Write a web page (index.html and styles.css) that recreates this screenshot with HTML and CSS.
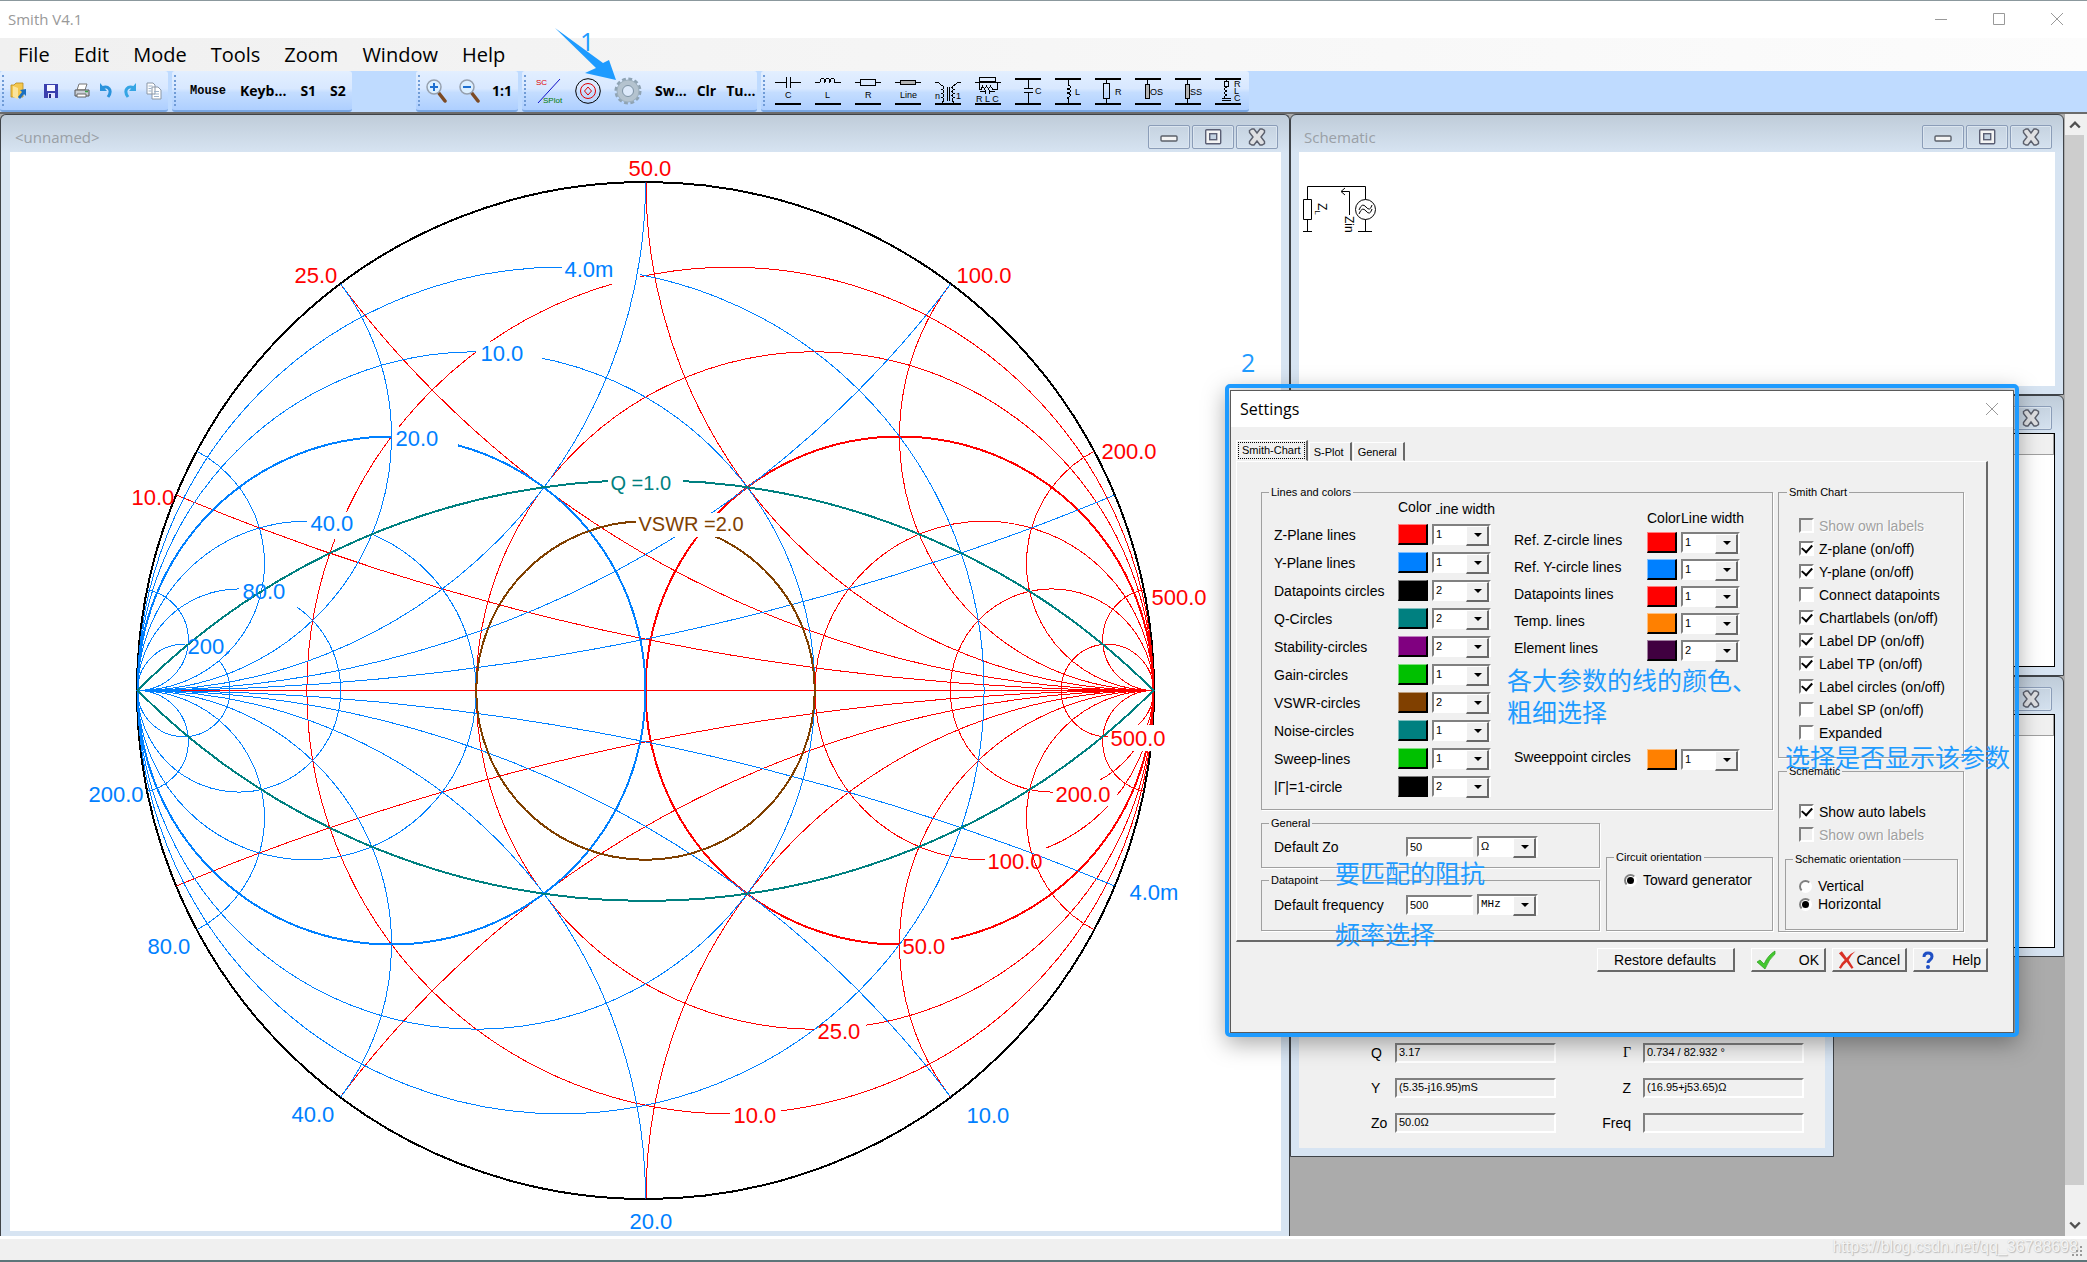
FILE: index.html
```html
<!DOCTYPE html>
<html lang="en">
<head>
<meta charset="utf-8">
<title>Smith V4.1</title>
<link rel="stylesheet" href="styles.css">
</head>
<body>
<svg class="defs" aria-hidden="true">
  <defs>
    <symbol id="i-min" viewBox="0 0 18 18"><rect x="1" y="8" width="16" height="5" rx="1" fill="#f4f4f4" stroke="#5b6069" stroke-width="1.4"/></symbol>
    <symbol id="i-max" viewBox="0 0 18 18"><rect x="1.7" y="1.7" width="15" height="14" rx="1" fill="#f4f4f4" stroke="#5b5f74" stroke-width="1.4"/><rect x="5.7" y="5.7" width="7" height="6" fill="#c5d3e2" stroke="#5b5f74" stroke-width="1.4"/></symbol>
    <symbol id="i-close" viewBox="0 0 18 18"><path d="M1.5 2.5 4 1h2l3 4 3-4h2l2.500 1.500v2L13 9l3.500 4.500v2L14 17h-2l-3-4-3 4H4l-2.500-1.500v-2L5 9 1.500 4.500z" fill="#dfe0e3" stroke="#5b5f6c" stroke-width="1.400"/></symbol>
  </defs>
</svg>

<header class="titlebar">
  <h1>Smith V4.1</h1>
  <div class="caption-buttons">
    <button type="button" aria-label="Minimize"><svg viewBox="0 0 12 12"><path d="M0 6.5h12"/></svg></button>
    <button type="button" aria-label="Maximize"><svg viewBox="0 0 12 12"><path d="M.5.5h11v11H.5z"/></svg></button>
    <button type="button" aria-label="Close"><svg viewBox="0 0 12 12"><path d="m0 0 12 12M12 0 0 12"/></svg></button>
  </div>
</header>

<nav class="menubar">
  <button type="button">File</button><button type="button">Edit</button><button type="button">Mode</button><button type="button">Tools</button><button type="button">Zoom</button><button type="button">Window</button><button type="button">Help</button>
</nav>

<div class="toolbar">
  <div class="band band-file">
    <button type="button" class="t-wide" aria-label="Open"><svg width="18" height="18" viewBox="0 0 18 18"><path d="M1 3h3l2-2h7v14H1z" fill="#f3c74f" stroke="#b98a1d" stroke-width=".8"/><path d="M3 4l5 2v11l-5-2z" fill="#fbe49b"/><path d="M16 7v7l-2-2-4 5-2-2 4-5-2-2z" fill="#1b6fc0"/></svg></button>
    <button type="button" class="t-wide" aria-label="Save"><svg width="14" height="16" viewBox="0 0 14 16"><path d="M0 1h14v14H0z" fill="#3a3fae"/><path d="M3 2h8v6H3z" fill="#f5f6ff"/><path d="M4 10h7v5H4z" fill="#dfe3ff"/><path d="M5 11h2v4H5z" fill="#222a80"/></svg></button>
    <button type="button" class="t-small first" aria-label="Print"><svg width="16" height="16" viewBox="0 0 16 16"><path d="m5 1 8 0-2 6H3z" fill="#fff" stroke="#777"/><path d="M1 7h14v6H1z" fill="#c9ced6" stroke="#555"/><path d="M3 11h9v3H3z" fill="#fff" stroke="#666"/><path d="M11 8.500h3" stroke="#3aa34a" stroke-width="1.500"/></svg></button>
    <button type="button" class="t-small" aria-label="Undo"><svg width="14" height="16" viewBox="0 0 14 16"><path d="M3 5c6-3 11 2 6 9" fill="none" stroke="#2b93dc" stroke-width="3"/><path d="M1 0v8h7z" fill="#2b93dc"/></svg></button>
    <button type="button" class="t-small" aria-label="Redo"><svg width="14" height="16" viewBox="0 0 14 16"><path d="M11 5C5 2 0 7 5 14" fill="none" stroke="#35a5e4" stroke-width="3"/><path d="M13 0v8H6z" fill="#35a5e4"/></svg></button>
    <button type="button" class="t-small" aria-label="Copy"><svg width="16" height="18" viewBox="0 0 16 18"><path d="M1 1h6l2 2v9H1zM6 5h6l3 3v9H6z" fill="#fff" stroke="#8b97a6"/><path d="M2.500 4h4m-4 2.500h3m-3 2.500h3M8 9.500h5M8 12h5m-5 2.500h5" stroke="#9fb4cc"/></svg></button>
  </div>
  <div class="band band-mode">
    <button type="button" class="mono">Mouse</button><button type="button">Keyb...</button><button type="button">S1</button><button type="button">S2</button>
  </div>
  <div class="band band-zoom">
    <button type="button" aria-label="Zoom in"><svg width="21" height="24" viewBox="0 0 21 24"><path d="m12 13 7 9" stroke="#7c4a24" stroke-width="3.500" stroke-linecap="round"/><circle cx="8" cy="8" r="7" fill="#dcefff" stroke="#96a0ae" stroke-width="1.500"/><path d="M8 4v8M4 8h8" stroke="#1d6fd0" stroke-width="2"/></svg></button>
    <button type="button" aria-label="Zoom out"><svg width="21" height="24" viewBox="0 0 21 24"><path d="m12 13 7 9" stroke="#7c4a24" stroke-width="3.500" stroke-linecap="round"/><circle cx="8" cy="8" r="7" fill="#dcefff" stroke="#96a0ae" stroke-width="1.500"/><path d="M4 8h8" stroke="#1d6fd0" stroke-width="2"/></svg></button>
    <button type="button">1:1</button>
  </div>
  <div class="band band-view">
    <button type="button" aria-label="Smith chart or S-plot"><svg class="glyphs" width="26" height="26" viewBox="0 0 26 26"><path d="M2 25 24 1" stroke="#1010c8"/><text x="0" y="7" fill="#e00000">SC</text><text x="7" y="25" fill="#007a00">SPlot</text></svg></button>
    <button type="button" aria-label="Circles"><svg width="26" height="26" viewBox="0 0 26 26" fill="none"><circle cx="13" cy="13" r="12.300" stroke="#000"/><circle cx="13" cy="13" r="7.500" stroke="#e00000"/><path d="m13 9 3.500 4-3.500 4-3.500-4z" stroke="#e00000"/></svg></button>
    <button type="button" aria-label="Settings"><svg width="28" height="30" viewBox="0 0 28 30"><circle cx="14" cy="15" r="12" fill="none" stroke="#8fa3b3" stroke-width="3" stroke-dasharray="3.800 2.480"/><circle cx="14" cy="15" r="8" fill="none" stroke="#b4c3cf" stroke-width="6"/><circle cx="14" cy="15" r="11" fill="none" stroke="#9cafbd"/><circle cx="14" cy="15" r="5.500" fill="#dce9fa" stroke="#7e93a5"/></svg></button>
    <button type="button" class="t-text">Sw...</button><button type="button" class="t-text">Clr</button><button type="button" class="t-text">Tu...</button>
  </div>
  <div class="band band-parts">
    <button type="button" aria-label="Series C"><svg class="part" viewBox="0 0 26 28"><path d="M0 5.500h11.500M15.500 5.500H26M11.500 0v11M15.500 0v11"/><path class="bar" d="M0 26.500h26"/><text x="10" y="21">C</text></svg></button>
    <button type="button" aria-label="Series L"><svg class="part" viewBox="0 0 26 28"><path d="M0 5.500h5q0-4 2.500-4t2.500 4q0-4 2.500-4t2.500 4q0-4 2.500-4t2.500 4h6"/><path class="bar" d="M0 26.500h26"/><text x="10" y="21">L</text></svg></button>
    <button type="button" aria-label="Series R"><svg class="part" viewBox="0 0 26 28"><path d="M0 5.500h5.500M20.500 5.500H26M5.500 2.500h15v6h-15z"/><path class="bar" d="M0 26.500h26"/><text x="10" y="21">R</text></svg></button>
    <button type="button" aria-label="Series line"><svg class="part" viewBox="0 0 26 28"><path d="M0 5.500h5.500M20.500 5.500H26"/><path class="fill" d="M5.500 3.500h15v4h-15z"/><path class="bar" d="M0 26.500h26"/><text x="5" y="21">Line</text></svg></button>
    <button type="button" aria-label="Transformer"><svg class="part" viewBox="0 0 26 28"><path d="M0 5.500h3l4 3q4 2 0 4 4 2 0 4 4 2 0 4 4 2 0 5M26 5.500h-3l-4 3q-4 2 0 4-4 2 0 4-4 2 0 4-4 2 0 5M12 10v14M14.500 10v14"/><path class="bar" d="M0 26.500h26"/><text x="0" y="22">n</text><text x="21" y="22">1</text></svg></button>
    <button type="button" aria-label="Parallel RLC"><svg class="part" viewBox="0 0 26 28"><path d="M4.500 0h16v4h-16zM0 5.500h26M4.500 6v6l2 0 1-3 2 3 2-3 2 3 2-3 2 3h5V6M10.500 12.500v4M14.500 12.500v4M5 14.500h5M15 14.500h5"/><path class="bar" d="M0 26.500h26"/><text x="1" y="25">R L C</text></svg></button>
    <button type="button" aria-label="Shunt C"><svg class="part" viewBox="0 0 26 28"><path class="bar" d="M0 1.500h26M0 26.500h26"/><path d="M13.500 2v9M13.500 15v11M9 11.500h9M9 15.500h9"/><text x="20" y="17">C</text></svg></button>
    <button type="button" aria-label="Shunt L"><svg class="part" viewBox="0 0 26 28"><path class="bar" d="M0 1.500h26M0 26.500h26"/><path d="M13.500 2v6q5 2-1 4 6 2 0 4 6 2 0 5l1 0v5"/><text x="20" y="18">L</text></svg></button>
    <button type="button" aria-label="Shunt R"><svg class="part" viewBox="0 0 26 28"><path class="bar" d="M0 1.500h26M0 26.500h26"/><path d="M11.500 2v4M11.500 22v4M8.500 6.500h6v15h-6z"/><text x="20" y="18">R</text></svg></button>
    <button type="button" aria-label="Open stub"><svg class="part" viewBox="0 0 26 28"><path class="bar" d="M0 1.500h26M0 26.500h26"/><path d="M12.500 2v20"/><path class="fill" d="M10.500 7.500h4v14h-4z"/><text x="15" y="18">OS</text></svg></button>
    <button type="button" aria-label="Shorted stub"><svg class="part" viewBox="0 0 26 28"><path class="bar" d="M0 1.500h26M0 26.500h26"/><path d="M12.500 2v24"/><path class="fill" d="M10.500 7.500h4v14h-4z"/><text x="15" y="18">SS</text></svg></button>
    <button type="button" aria-label="Shunt series RLC"><svg class="part" viewBox="0 0 26 28"><path class="bar" d="M0 1.500h26M0 26.500h26"/><path d="M11.500 2v2M9.500 4.500h4v5h-4zM11.500 10q-4 2 0 4-4 2 0 4-4 2 0 4M7 21.500h9M7 23.500h9"/><text x="19" y="10">R</text><text x="19" y="17">L</text><text x="19" y="24">C</text></svg></button>
  </div>
</div>

<main class="workspace">
  <section class="window w-chart">
    <header><h2>&lt;unnamed&gt;</h2>
      <div class="win-buttons"><button type="button" aria-label="Minimize"><svg><use href="#i-min"/></svg></button><button type="button" aria-label="Maximize"><svg><use href="#i-max"/></svg></button><button type="button" aria-label="Close"><svg><use href="#i-close"/></svg></button></div>
    </header>
    <div class="content">
      <svg class="smith" viewBox="0 0 1271 1079" role="img" aria-label="Smith chart">
        <defs><clipPath id="unit"><circle r="508"/></clipPath></defs>
        <g transform="translate(635.5 538.5)">
          <circle class="rim" r="508.500"/>
          <!-- constant resistance circles, 10 to 500 ohm -->
          <g class="z">
            <circle cx="84.700" r="423.300"/><path class="mask" d="M84 411h51v26H84z"/>
            <circle cx="169.300" r="338.700"/><path class="mask" d="M169 326h51v26h-51z"/>
            <circle class="ref" cx="254" r="254"/><path class="mask" d="M254 242h51v26h-51z"/>
            <circle cx="338.700" r="169.300"/><path class="mask" d="M339 157h64v26h-64z"/>
            <circle cx="406.400" r="101.600"/><path class="mask" d="M407 89h64v26h-64z"/>
            <circle cx="461.800" r="46.200"/><path class="mask" d="M462 34h52v26h-52z"/>
          </g>
          <!-- constant reactance arcs -->
          <g class="z" clip-path="url(#unit)">
            <path d="M-470 0H508"/>
            <circle cx="508" cy="-2540" r="2540"/><circle cx="508" cy="2540" r="2540"/>
            <circle cx="508" cy="-1016" r="1016"/><circle cx="508" cy="1016" r="1016"/>
            <circle cx="508.500" cy="-508" r="508"/><circle cx="508.500" cy="508" r="508"/>
            <circle cx="508" cy="-254" r="254"/><circle cx="508" cy="254" r="254"/>
            <circle cx="508" cy="-127" r="127"/><circle cx="508" cy="127" r="127"/>
            <circle cx="508" cy="-50.800" r="50.800"/><circle cx="508" cy="50.800" r="50.800"/>
          </g>
          <!-- constant conductance circles, 4 to 200 mS -->
          <g class="y">
            <circle cx="-84.700" r="423.300"/><path class="mask" d="M-84-434h78v27h-78z"/>
            <circle cx="-169.300" r="338.700"/><path class="mask" d="M-170-349h66v27h-66z"/>
            <circle class="ref" cx="-254" r="254"/><path class="mask" d="M-254-264h66v27h-66z"/>
            <circle cx="-338.700" r="169.300"/><path class="mask" d="M-339-179h66v27h-66z"/>
            <circle cx="-406.400" r="101.600"/><path class="mask" d="M-407-111h64v27h-64z"/>
            <circle cx="-461.800" r="46.200"/><path class="mask" d="M-461-56h34v27h-34z"/>
          </g>
          <!-- constant susceptance arcs -->
          <g class="y" clip-path="url(#unit)">
            <circle cx="-508" cy="-2540" r="2540"/><circle cx="-508" cy="2540" r="2540"/>
            <circle cx="-508" cy="-1016" r="1016"/><circle cx="-508" cy="1016" r="1016"/>
            <circle cx="-508" cy="-508" r="508"/><circle cx="-508" cy="508" r="508"/>
            <circle cx="-508" cy="-254" r="254"/><circle cx="-508" cy="254" r="254"/>
            <circle cx="-508" cy="-127" r="127"/><circle cx="-508" cy="127" r="127"/>
            <circle cx="-508" cy="-50.800" r="50.800"/><circle cx="-508" cy="50.800" r="50.800"/>
          </g>
          <g class="q"><path d="M-508 0A718.400 718.400 0 0 1 508 0A718.400 718.400 0 0 1-508 0"/><path class="mask" d="M-38-218h75v22h-75z"/></g>
          <g class="vswr"><circle r="169.300"/><path class="mask" d="M-10-178h115v24H-10z"/></g>
          <g class="labels red">
            <text x="88" y="432">10.0</text><text x="172" y="348">25.0</text><text x="257" y="263">50.0</text><text x="342" y="178">100.0</text><text x="410" y="111">200.0</text><text x="465" y="55">500.0</text>
            <text x="-17" y="-515">50.0</text><text x="-351" y="-408">25.0</text><text x="-514" y="-186">10.0</text><text x="311" y="-408">100.0</text><text x="456" y="-232">200.0</text><text x="506" y="-86">500.0</text>
          </g>
          <g class="labels blue">
            <text x="-81" y="-414">4.0m</text><text x="-165" y="-330">10.0</text><text x="-250" y="-245">20.0</text><text x="-335" y="-160">40.0</text><text x="-403" y="-92">80.0</text><text x="-458" y="-37">200.</text>
            <text x="-557" y="111">200.0</text><text x="-498" y="263">80.0</text><text x="-354" y="431">40.0</text><text x="-16" y="538">20.0</text><text x="321" y="432">10.0</text><text x="484" y="209">4.0m</text>
          </g>
          <g class="labels small"><text class="teal" x="-35" y="-201">Q =1.0</text><text class="brown" x="-7" y="-160">VSWR =2.0</text></g>
        </g>
      </svg>
    </div>
  </section>

  <section class="window w-schematic">
    <header><h2>Schematic</h2>
      <div class="win-buttons"><button type="button" aria-label="Minimize"><svg><use href="#i-min"/></svg></button><button type="button" aria-label="Maximize"><svg><use href="#i-max"/></svg></button><button type="button" aria-label="Close"><svg><use href="#i-close"/></svg></button></div>
    </header>
    <div class="content">
      <svg class="circuit" width="90" height="90" viewBox="0 0 90 90" role="img" aria-label="Load and generator">
        <path d="M8.500 47.500v-13h58v13M4.500 47.500h8v20h-8zM8.500 67.500v12M4 79.500h9M66.500 67.500v12M59 79.500h14M50.500 63v-23.500h-8M46 36l-4 3.500 4 3.500"/>
        <circle cx="66.500" cy="57.500" r="10"/>
        <path d="M60 58q3-8 7-3t6-2M60 62q3-8 7-3t6-2"/>
        <text transform="translate(19 51) rotate(90)">Z<tspan class="sub" dy="3">L</tspan></text>
        <text transform="translate(46 64) rotate(90)">Zin</text>
      </svg>
    </div>
  </section>

  <section class="window w-list w-datapoints">
    <header><div class="win-buttons"><button type="button" aria-label="Close"><svg><use href="#i-close"/></svg></button></div></header>
    <div class="content"><div class="list-head"></div></div>
  </section>
  <section class="window w-list w-startpoint">
    <header><div class="win-buttons"><button type="button" aria-label="Close"><svg><use href="#i-close"/></svg></button></div></header>
    <div class="content"><div class="list-head"></div></div>
  </section>

  <section class="window w-cursor">
    <header></header>
    <form class="content readout">
      <label for="q">Q</label><input id="q" value="3.17" readonly><label class="end greek" for="gamma">Γ</label><input id="gamma" value="0.734 / 82.932 °" readonly>
      <label for="y">Y</label><input id="y" value="(5.35-j16.95)mS" readonly><label class="end" for="z">Z</label><input id="z" value="(16.95+j53.65)Ω" readonly>
      <label for="zo">Zo</label><input id="zo" value="50.0Ω" readonly><label class="end" for="freq">Freq</label><input id="freq" value="" readonly>
    </form>
  </section>

  <div class="scrollbar">
    <button type="button" aria-label="Scroll up"><svg viewBox="0 0 10 7"><path d="m1 6 4-4 4 4"/></svg></button>
    <div class="thumb"></div>
    <button type="button" aria-label="Scroll down"><svg viewBox="0 0 10 7"><path d="m1 1 4 4 4-4"/></svg></button>
  </div>

  <section class="dialog" role="dialog" aria-labelledby="dlg-title">
    <header><h2 id="dlg-title">Settings</h2><button type="button" aria-label="Close"><svg viewBox="0 0 12 12"><path d="m0 0 12 12M12 0 0 12"/></svg></button></header>
    <form class="dialog-body">
      <div class="tabs" role="tablist">
        <button type="button" role="tab" class="active" aria-selected="true"><span>Smith-Chart</span></button><button type="button" role="tab">S-Plot</button><button type="button" role="tab">General</button>
      </div>
      <div class="panel">
        <div class="col-main">
          <fieldset class="lines"><legend>Lines and colors</legend>
            <div class="line-grid left">
              <span></span><span class="head head-color">Color</span><span class="head">Line width</span>
              <label for="l1">Z-Plane lines</label><button type="button" class="swatch c-red" aria-label="Color"></button><span class="combo"><select id="l1"><option>1</option></select></span>
              <label for="l2">Y-Plane lines</label><button type="button" class="swatch c-blue" aria-label="Color"></button><span class="combo"><select id="l2"><option>1</option></select></span>
              <label for="l3">Datapoints circles</label><button type="button" class="swatch c-black" aria-label="Color"></button><span class="combo"><select id="l3"><option>2</option></select></span>
              <label for="l4">Q-Circles</label><button type="button" class="swatch c-teal" aria-label="Color"></button><span class="combo"><select id="l4"><option>2</option></select></span>
              <label for="l5">Stability-circles</label><button type="button" class="swatch c-purple" aria-label="Color"></button><span class="combo"><select id="l5"><option>2</option></select></span>
              <label for="l6">Gain-circles</label><button type="button" class="swatch c-green" aria-label="Color"></button><span class="combo"><select id="l6"><option>1</option></select></span>
              <label for="l7">VSWR-circles</label><button type="button" class="swatch c-brown" aria-label="Color"></button><span class="combo"><select id="l7"><option>2</option></select></span>
              <label for="l8">Noise-circles</label><button type="button" class="swatch c-teal" aria-label="Color"></button><span class="combo"><select id="l8"><option>1</option></select></span>
              <label for="l9">Sweep-lines</label><button type="button" class="swatch c-green" aria-label="Color"></button><span class="combo"><select id="l9"><option>1</option></select></span>
              <label for="l10">|Γ|=1-circle</label><button type="button" class="swatch c-black" aria-label="Color"></button><span class="combo"><select id="l10"><option>2</option></select></span>
            </div>
            <div class="line-grid right">
              <span></span><span class="head">Color</span><span class="head">Line width</span>
              <label for="r1">Ref. Z-circle lines</label><button type="button" class="swatch c-red" aria-label="Color"></button><span class="combo"><select id="r1"><option>1</option></select></span>
              <label for="r2">Ref. Y-circle lines</label><button type="button" class="swatch c-blue" aria-label="Color"></button><span class="combo"><select id="r2"><option>1</option></select></span>
              <label for="r3">Datapoints lines</label><button type="button" class="swatch c-red" aria-label="Color"></button><span class="combo"><select id="r3"><option>1</option></select></span>
              <label for="r4">Temp. lines</label><button type="button" class="swatch c-orange" aria-label="Color"></button><span class="combo"><select id="r4"><option>1</option></select></span>
              <label for="r5">Element lines</label><button type="button" class="swatch c-plum" aria-label="Color"></button><span class="combo"><select id="r5"><option>2</option></select></span>
              <label for="r6">Sweeppoint circles</label><button type="button" class="swatch c-orange" aria-label="Color"></button><span class="combo"><select id="r6"><option>1</option></select></span>
            </div>
          </fieldset>
          <div class="lower">
            <div class="defaults">
              <fieldset class="general"><legend>General</legend>
                <label for="dzo">Default Zo</label><input id="dzo" class="edit" value="50"><span class="combo unit"><select aria-label="Impedance unit"><option>Ω</option></select></span>
              </fieldset>
              <fieldset class="datapoint"><legend>Datapoint</legend>
                <label for="dfr">Default frequency</label><input id="dfr" class="edit" value="500"><span class="combo unit mono"><select aria-label="Frequency unit"><option>MHz</option></select></span>
              </fieldset>
            </div>
            <fieldset class="orientation"><legend>Circuit orientation</legend>
              <label class="radio"><input type="radio" name="circuit" checked>Toward generator</label>
            </fieldset>
          </div>
        </div>
        <div class="col-side">
          <fieldset class="chart-opts"><legend>Smith Chart</legend>
            <label class="check off"><input type="checkbox" disabled>Show own labels</label>
            <label class="check"><input type="checkbox" checked>Z-plane (on/off)</label>
            <label class="check"><input type="checkbox" checked>Y-plane (on/off)</label>
            <label class="check"><input type="checkbox">Connect datapoints</label>
            <label class="check"><input type="checkbox" checked>Chartlabels (on/off)</label>
            <label class="check"><input type="checkbox" checked>Label DP (on/off)</label>
            <label class="check"><input type="checkbox" checked>Label TP (on/off)</label>
            <label class="check"><input type="checkbox" checked>Label circles (on/off)</label>
            <label class="check"><input type="checkbox">Label SP (on/off)</label>
            <label class="check"><input type="checkbox">Expanded</label>
          </fieldset>
          <fieldset class="schem-opts"><legend>Schematic</legend>
            <label class="check"><input type="checkbox" checked>Show auto labels</label>
            <label class="check off"><input type="checkbox" disabled>Show own labels</label>
            <fieldset class="schem-dir"><legend>Schematic orientation</legend>
              <label class="radio"><input type="radio" name="dir">Vertical</label>
              <label class="radio"><input type="radio" name="dir" checked>Horizontal</label>
            </fieldset>
          </fieldset>
        </div>
      </div>
      <div class="actions">
        <button type="button" class="restore">Restore defaults</button>
        <button type="button"><svg width="20" height="20" viewBox="0 0 20 20"><path d="m1 12 3-2 4 4Q12 5 19 1l0 3Q13 9 9 19z" fill="#43c92f" stroke="#2b9a1c" stroke-width=".7"/></svg>OK</button>
        <button type="button"><svg width="20" height="20" viewBox="0 0 20 20"><path d="M2 3 5 1l5 7q4-5 9-7-5 4-7 9l5 8-2 1-5-7q-4 3-6 7l-2-1q2-5 6-8z" fill="#d93025"/></svg>Cancel</button>
        <button type="button"><svg width="20" height="20" viewBox="0 0 20 20"><path d="M6 7q0-4 4-4t4 3.500q0 2-2 3.500t-2 3" fill="none" stroke="#1f4fc4" stroke-width="3"/><circle cx="10" cy="17" r="2" fill="#1f4fc4"/></svg>Help</button>
      </div>
    </form>
  </section>
  <div class="highlight"></div>
</main>

<footer class="statusbar"><span class="watermark">https://blog.csdn.net/qq_36788698</span><svg class="grip" width="12" height="12" viewBox="0 0 12 12"><path d="M8 0h2v2H8zM4 4h2v2H4zM8 4h2v2H8zM0 8h2v2H0zM4 8h2v2H4zM8 8h2v2H8z" fill="#999"/></svg></footer>

<div class="notes">
  <svg class="arrow" width="64" height="54" viewBox="0 0 64 54"><path d="M0 0 48 35 54 32 61 52 30 45 41 40z" fill="#1e9bff"/></svg>
  <p class="n-one">1</p>
  <p class="n-two">2</p>
  <p class="n-lines" lang="zh">各大参数的线的颜色、<br>粗细选择</p>
  <p class="n-show" lang="zh">选择是否显示该参数</p>
  <p class="n-zo" lang="zh">要匹配的阻抗</p>
  <p class="n-freq" lang="zh">频率选择</p>
</div>
</body>
</html>
```

FILE: styles.css
```css
:root {
  --ui: "Open Sans", "Noto Sans", sans-serif;
  --classic: "Liberation Sans", Arial, sans-serif;
  --face: #f0f0f0;
  --frame: #d7e4f2;
  --note: #1e9bff;
  --red: #ff0000;
  --blue: #0080ff;
}
* { box-sizing: border-box; }
body {
  margin: 0;
  height: 100vh;
  position: relative;
  display: flex;
  flex-direction: column;
  overflow: hidden;
  background: #fff;
  border-bottom: 2px solid #5c7579;
  font-family: var(--ui);
}
h1, h2, p { margin: 0; font-weight: 400; }
button { margin: 0; padding: 0; border: 0; background: none; font: inherit; color: inherit; }
input, select { margin: 0; font: inherit; color: inherit; }
.defs { position: absolute; width: 0; height: 0; }

/* title bar and menu */
.titlebar {
  flex: none;
  height: 38px;
  border-top: 1px solid #8b989d;
  padding: 0 24px 2px 8px;
  display: flex;
  align-items: center;
  justify-content: space-between;
  color: #999;
}
.titlebar h1 { font-size: 15px; }
.caption-buttons { display: flex; gap: 46px; }
.caption-buttons svg, .dialog header svg { display: block; width: 12px; height: 12px; overflow: visible; fill: none; stroke: #999; }
.menubar {
  flex: none;
  height: 33px;
  padding-left: 6px;
  display: flex;
  background: linear-gradient(90deg, #f0f0f0, #fcfcfc);
  font-size: 20px;
}
.menubar button { padding: 0 12px; line-height: 33px; }

/* toolbar */
.toolbar { flex: none; height: 41px; display: flex; gap: 4px; background: #bfdbff; font-size: 14px; font-weight: 700; }
.band {
  position: relative;
  display: flex;
  align-items: center;
  border-bottom: 2px solid #79a7e3;
  border-radius: 3px;
  background: linear-gradient(#e3efff 0, #d8e8ff 45%, #c4ddff 55%, #aecfff 100%);
}
.band::before { content: ""; position: absolute; left: 2px; top: 4px; bottom: 4px; border-left: 2px dotted #6f9bd6; }
.band button { display: flex; align-items: center; justify-content: center; }
.band-file { padding: 0 2px 0 3px; }
.t-wide { width: 32px; }
.t-small { width: 24px; }
.t-small.first { margin-left: 3px; }
.band-mode { width: 180px; padding-left: 18px; gap: 14px; }
.mono { font-family: "Liberation Mono", monospace; font-size: 12px; }
.band-zoom { width: 102px; margin-left: 60px; padding-left: 10px; gap: 12px; }
.band-view { width: 235px; padding-left: 14px; gap: 13px; }
.t-text + .t-text { margin-left: -3px; }
.band-parts { width: 488px; padding-left: 7px; }
.band-parts button { width: 40px; }
.glyphs { overflow: visible; font: 8px var(--classic); }
.part { width: 26px; height: 28px; overflow: visible; fill: none; stroke: #000; shape-rendering: crispEdges; font: 9px var(--classic); }
.part text { fill: #000; stroke: none; }
.part .bar { stroke-width: 2; }
.part .fill { fill: #b4b4b4; }

/* child windows */
.workspace {
  flex: 1;
  position: relative;
  overflow: hidden;
  background: #ababab;
  border-top: 2px solid #6b6b6b;
}
.window {
  position: absolute;
  display: flex;
  flex-direction: column;
  padding: 0 8px 8px;
  border: 1px solid #3f4348;
  border-radius: 6px 6px 0 0;
  background: linear-gradient(#bfccd9 0, var(--frame) 38px);
}
.window > header { flex: none; height: 37px; display: flex; justify-content: space-between; padding-left: 5px; color: #9aa0a6; }
.window h2 { font-size: 15px; line-height: 44px; }
.window .content { flex: 1; min-height: 0; background: #fff; }
.win-buttons { display: flex; gap: 2px; padding: 10px 3px 0 0; margin-left: auto; }
.win-buttons button {
  width: 42px;
  height: 24px;
  display: grid;
  place-items: center;
  border: 1px solid #8b9db8;
  border-radius: 2px;
  box-shadow: inset 0 0 0 1px #dbe5ef;
}
.win-buttons svg { width: 18px; height: 18px; }
.w-chart { left: 0; top: 0; bottom: 0; width: 1290px; padding: 0 8px 5px 9px; border-bottom: 0; }
.w-schematic { left: 1290px; top: 0; width: 774px; height: 281px; }
.w-list { left: 1290px; width: 774px; }
.w-datapoints { top: 281px; height: 281px; }
.w-startpoint { top: 562px; height: 281px; }
.w-list .content { border: 1px solid #000; }
.list-head { height: 21px; background: var(--face); border: 1px solid #a0a0a0; border-width: 0 1px 1px 0; }
.w-cursor { left: 1290px; top: 843px; width: 544px; height: 200px; }
.w-cursor .readout {
  background: var(--face);
  display: grid;
  grid-template-columns: 24px 161px 75px 161px;
  grid-auto-rows: 20px;
  align-content: end;
  align-items: center;
  row-gap: 15px;
  padding: 0 0 15px 72px;
  font: 14px/20px var(--classic);
}
.readout .end { text-align: right; }
.readout .greek { font-family: "Liberation Serif", serif; }
.readout input:nth-of-type(even) { margin-left: 12px; }
.readout input {
  width: 161px;
  height: 20px;
  padding: 0 2px 2px;
  border: 2px solid;
  border-color: #808080 #fff #fff #808080;
  background: var(--face);
  font-size: 11px;
}

/* Smith chart */
.smith { display: block; width: 100%; height: 100%; overflow: visible; fill: none; shape-rendering: crispEdges; }
.rim { stroke: #000; stroke-width: 2; }
.z { stroke: var(--red); }
.y { stroke: var(--blue); }
.ref { stroke-width: 2; }
.mask { fill: #fff; stroke: none; }
.q { stroke: #008080; stroke-width: 2; }
.vswr { stroke: #804000; stroke-width: 2; }
.labels { font: 22px var(--classic); stroke: none; }
.labels.small { font-size: 20px; }
.red { fill: var(--red); }
.blue { fill: var(--blue); }
.teal { fill: #008080; }
.brown { fill: #804000; }

.circuit { display: block; fill: none; stroke: #000; }
.circuit text { fill: #000; stroke: none; font: 12px var(--classic); }
.circuit .sub { font-size: 8px; }

/* workspace scroll bar */
.scrollbar {
  position: absolute;
  right: 0;
  top: 0;
  bottom: 0;
  width: 22px;
  padding-right: 3px;
  display: flex;
  flex-direction: column;
  background: var(--face);
}
.scrollbar button { height: 21px; display: grid; place-items: center; }
.scrollbar svg { width: 12px; height: 9px; fill: none; stroke: #505050; stroke-width: 2; }
.scrollbar .thumb { flex: 1; margin-bottom: 30px; background: #cdcdcd; }

/* settings dialog */
.highlight {
  position: absolute;
  left: 1225px;
  top: 270px;
  width: 794px;
  height: 653px;
  border: 4px solid var(--note);
  border-radius: 5px;
  pointer-events: none;
}
.dialog {
  position: absolute;
  left: 1230px;
  top: 276px;
  width: 784px;
  border: 1px solid #5a5a5a;
  background: var(--face);
  box-shadow: 0 6px 22px 4px rgba(0, 0, 0, .35);
  font: 14px/16px var(--classic);
  color: #000;
}
.dialog > header { height: 36px; padding: 0 15px 0 9px; display: flex; align-items: center; justify-content: space-between; background: #fff; font-family: var(--ui); }
.dialog h2 { font-size: 16px; }
.dialog-body { padding: 13px 25px 60px 5px; }
.tabs { display: flex; align-items: flex-end; gap: 1px; height: 21px; font-size: 11px; }
.tabs button { height: 19px; padding: 0 6px 0 4px; border: 1px solid; border-color: #fff #696969 transparent #fff; border-right-width: 2px; }
.tabs .active { height: 21px; padding: 1px; }
.tabs .active span { display: block; border: 1px dotted #000; padding: 0 3px; line-height: 15px; }
.panel {
  display: flex;
  justify-content: space-between;
  padding: 24px 22px 8px 24px;
  border: 1px solid;
  border-color: #fff #696969 #696969 #fff;
  border-right-width: 2px;
  border-bottom-width: 2px;
}
fieldset { min-width: 0; margin: 0; padding: 0; border: 1px solid #a0a0a0; box-shadow: 1px 1px 0 #fff; }
legend { margin-left: 8px; padding: 0 2px; font-size: 11px; line-height: 12px; background: var(--face); }
.col-main { width: 512px; display: flex; flex-direction: column; gap: 7px; }
.col-side { width: 186px; display: flex; flex-direction: column; gap: 7px; }
.lines { display: flex; gap: 23px; padding: 0 0 12px 12px; }
.lines legend, .defaults legend { margin-left: -5px; }
.line-grid { display: inline-grid; vertical-align: top; column-gap: 4px; align-content: start; align-items: center; white-space: nowrap; }
.line-grid.left { grid-template-columns: 120px 30px 59px; grid-template-rows: 19px; grid-auto-rows: 21px; row-gap: 7px; }
.line-grid.right { grid-template-columns: 129px 30px 59px; grid-template-rows: 28px; grid-auto-rows: 21px; row-gap: 6px; }
.line-grid.right label { padding-bottom: 6px; }
.line-grid .head { align-self: end; }
.line-grid.right > :nth-last-child(-n+3) { margin-top: 164px; }
.line-grid .head-color { position: relative; z-index: 1; width: 38px; height: 12px; margin-bottom: 3px; line-height: 11px; background: var(--face); }
.swatch { height: 21px; border: 1px solid; border-color: #ffffff80 #000 #000 #ffffff80; border-bottom-width: 2px; border-right-width: 2px; }
.c-red { background: #f00; }
.c-blue { background: #0080ff; }
.c-black { background: #000; }
.c-teal { background: #008080; }
.c-purple { background: #800080; }
.c-green { background: #00c000; }
.c-brown { background: #804000; }
.c-orange { background: #ff8000; }
.c-plum { background: #400040; }
.combo {
  position: relative;
  display: block;
  height: 21px;
  border: 2px solid;
  border-color: #808080 #fff #fff #808080;
  background: #fff;
}
.combo select { appearance: none; width: 100%; height: 16px; padding: 0 2px; border: 0; background: none; font-size: 11px; line-height: 16px; display: block; }
.combo::before {
  content: "";
  position: absolute;
  right: 0;
  top: 0;
  width: 20px;
  height: 17px;
  border: 1px solid;
  border-color: #fff #696969 #696969 #fff;
  border-right-width: 2px;
  border-bottom-width: 2px;
  background: var(--face);
  pointer-events: none;
}
.combo::after {
  content: "";
  position: absolute;
  right: 7px;
  top: 7px;
  border: 4px solid transparent;
  border-top-color: #000;
  border-bottom: 0;
  pointer-events: none;
}
.lower { display: flex; justify-content: space-between; align-items: flex-end; }
.defaults { width: 339px; display: flex; flex-direction: column; gap: 6px; }
.general, .datapoint { display: grid; grid-template-columns: 132px 67px 61px; column-gap: 0; align-items: center; }
.general { padding: 7px 0 10px 12px; }
.datapoint { padding: 8px 0 15px 12px; }
.unit { width: 61px; margin-left: 4px; }
.unit.mono select { font-family: "Liberation Mono", monospace; }
.edit { height: 20px; padding: 0 2px; border: 2px solid; border-color: #808080 #fff #fff #808080; background: #fff; font-size: 11px; }
.orientation { width: 167px; padding: 8px 0 41px 17px; }
.orientation legend { margin-left: -10px; }
.radio, .check { display: flex; align-items: center; gap: 6px; white-space: nowrap; }
.radio { height: 18px; }
.check { height: 23px; padding-left: 20px; gap: 5px; }
.check input { appearance: none; width: 15px; height: 15px; border: 2px solid; border-color: #808080 #fff #fff #808080; background: #fff; display: grid; place-items: center; }
.check input:checked::before { content: ""; width: 8px; height: 5px; border: solid #000; border-width: 0 0 2px 2px; transform: translateY(-1px) rotate(-48deg); }
.check input:disabled { background: var(--face); }
.off { color: #a0a0a0; text-shadow: 1px 1px 0 #fff; }
.radio input { appearance: none; width: 13px; height: 13px; border: 2px solid; border-color: #808080 #fff #fff #808080; border-radius: 50%; background: #fff; display: grid; place-items: center; }
.radio input:checked::before { content: ""; width: 7px; height: 7px; border-radius: 50%; background: #000; }
.chart-opts { padding: 16px 0 13px; }
.schem-opts { padding: 23px 0 1px; }
.schem-dir { margin: 7px 5px 0 6px; padding: 12px 0 16px 13px; }
.schem-dir legend { margin-left: -6px; }
.actions { display: flex; justify-content: flex-end; gap: 6px; margin-top: 6px; }
.actions button {
  width: 75px;
  height: 24px;
  padding: 0 5px 0 4px;
  display: flex;
  align-items: center;
  justify-content: space-between;
  border: 1px solid;
  border-color: #fff #696969 #696969 #fff;
  border-right-width: 2px;
  border-bottom-width: 2px;
}
.actions .restore { width: 138px; margin-right: 10px; justify-content: center; }

/* status bar */
.statusbar {
  flex: none;
  height: 24px;
  border-top: 3px solid #fff;
  padding: 0 3px 0 0;
  display: flex;
  justify-content: flex-end;
  align-items: center;
  background: var(--face);
}
.watermark { color: #f4f4f4; font: 16px/20px var(--classic); text-shadow: 1px 1px 1px #bbb, 0 0 1px #ccc; padding-bottom: 6px; }
.grip { align-self: flex-end; margin-left: -6px; margin-bottom: 2px; }

/* hand-placed notes over the window */
.notes { position: absolute; inset: 0; pointer-events: none; color: var(--note); font: 25px/32px var(--ui); }
.notes p, .arrow { position: absolute; white-space: nowrap; }
.notes [lang="zh"] { font-family: "Noto Sans CJK SC", sans-serif; font-weight: 400; }
.arrow { left: 555px; top: 28px; }
.n-one { left: 580px; top: 25px; }
.n-two { left: 1241px; top: 346px; }
.n-lines { left: 1507px; top: 663px; }
.n-show { left: 1785px; top: 740px; }
.n-zo { left: 1335px; top: 856px; }
.n-freq { left: 1335px; top: 917px; }
```
